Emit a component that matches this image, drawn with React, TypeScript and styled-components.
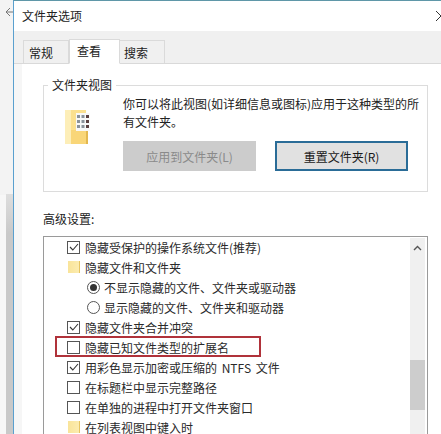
import React from "react";
import styled, { createGlobalStyle } from "styled-components";

const Global = createGlobalStyle`
  html, body { margin: 0; padding: 0; background: #fff; overflow: hidden; }
  body { font-family: "Noto Sans CJK SC", "Liberation Sans", sans-serif; font-size: 12px; color: #222; }
  #root { width: 441px; height: 434px; overflow: hidden; }
`;

const Screen = styled.div`
  display: flex;
  width: 441px;
  height: 434px;
  overflow: hidden;
`;
const Strip = styled.div`
  width: 13px;
  flex: none;
  display: flex;
  flex-direction: column;
  justify-content: space-between;
  background: linear-gradient(to bottom, #f3f3f3 0, #f3f3f3 195px, #f7f7f7 195px, #f7f7f7 100%);
`;
const StripIcon = styled.svg`
  display: block;
  margin: 7px 0 0 5px;
`;
const StripShade = styled.div`
  height: 240px;
  margin-left: 6px;
  background: linear-gradient(to bottom, #dedede, #c9c9c9 40px);
`;
const Win = styled.div`
  flex: 1;
  min-width: 0;
  display: flex;
  flex-direction: column;
  border-left: 1px solid #5aa0cf;
  border-top: 1px solid #5f97a8;
  background: #f6f6f6;
`;
const TitleBar = styled.div`
  height: 30px;
  flex: none;
  display: flex;
  align-items: center;
  justify-content: space-between;
  padding: 0 0 2px 8px;
  box-sizing: border-box;
  background: #fff;
  font-size: 12px;
`;
const CloseMark = styled.svg`
  display: block;
  margin-top: 2px;
`;
const TabBar = styled.div`
  height: 33px;
  flex: none;
  display: flex;
  align-items: flex-end;
  padding-left: 9px;
  background: #f0f0f0;
  border-bottom: 1px solid #d9d9d9;
  box-sizing: border-box;
`;
const Tab = styled.div<{ $active?: boolean; $w: number; $pad: number }>`
  width: ${(p) => p.$w}px;
  height: ${(p) => (p.$active ? 25 : 23)}px;
  box-sizing: border-box;
  display: flex;
  align-items: center;
  padding-left: ${(p) => p.$pad}px;
  padding-bottom: ${(p) => (p.$active ? 3 : 0)}px;
  border: 1px solid #dadada;
  border-left-width: ${(p) => (p.$active ? 1 : 0)}px;
  border-bottom: ${(p) => (p.$active ? "1px solid #fff" : "none")};
  background: ${(p) => (p.$active ? "#fff" : "#f0f0f0")};
  margin-bottom: ${(p) => (p.$active ? -1 : 0)}px;
  position: relative;
  &:first-child { border-left-width: 1px; }
`;
const Page = styled.div`
  flex: 1;
  min-height: 0;
  margin-left: 8px;
  padding: 14px 0 0 21px;
  background: #fff;
`;
const Group = styled.fieldset`
  width: 385px;
  height: 114px;
  box-sizing: border-box;
  margin: 0;
  padding: 0;
  border: 1px solid #dcdcdc;
  display: flex;
`;
const GroupTitle = styled.legend`
  margin-left: 4px;
  padding: 0 4px;
  line-height: 14px;
  font-size: 12px;
`;
const GroupBody = styled.div`
  display: flex;
  padding: 3px 0 0 21px;
`;
const BigFolder = styled.svg`
  display: block;
  flex: none;
  margin-top: 15px;
`;
const GroupMain = styled.div`
  margin-left: 32px;
  width: 300px;
`;
const Desc = styled.div`
  line-height: 18px;
  height: 36px;
  white-space: nowrap;
  color: #222;
`;
const Buttons = styled.div`
  display: flex;
  gap: 19px;
  margin-top: 10px;
`;
const Btn = styled.div<{ $primary?: boolean }>`
  width: 133px;
  height: 30px;
  box-sizing: border-box;
  display: flex;
  align-items: center;
  justify-content: center;
  background: ${(p) => (p.$primary ? "#e1e1e1" : "#cccccc")};
  color: ${(p) => (p.$primary ? "#1a1a1a" : "#8a8a8a")};
  border: ${(p) => (p.$primary ? "2px solid #2a6c97" : "none")};
`;
const AdvLabel = styled.div`
  margin-top: 19px;
  line-height: 16px;
  height: 25px;
`;
const ListBox = styled.div`
  width: 385px;
  height: 220px;
  box-sizing: border-box;
  border: 1px solid #9a9a9a;
  display: flex;
  background: #fff;
`;
const Rows = styled.div`
  flex: 1;
  min-width: 0;
`;
const Row = styled.div<{ $indent?: number }>`
  height: 20px;
  position: relative;
  display: flex;
  align-items: center;
  gap: 5px;
  padding-left: ${(p) => 23 + (p.$indent ?? 0)}px;
  white-space: nowrap;
  word-spacing: 2px;
  color: #2a2a2a;
`;
const Box = styled.span`
  width: 11px;
  height: 11px;
  flex: none;
  border: 1px solid #555;
  background: #fff;
  display: flex;
  align-items: center;
  justify-content: center;
`;
const Radio = styled.span<{ $on?: boolean }>`
  width: 11px;
  height: 11px;
  flex: none;
  border: 1px solid #555;
  border-radius: 50%;
  display: flex;
  align-items: center;
  justify-content: center;
  margin-right: -1px;
  &::after {
    content: "";
    width: 7px;
    height: 7px;
    border-radius: 50%;
    background: ${(p) => (p.$on ? "#333" : "transparent")};
  }
`;
const SmallFolder = styled.span`
  width: 11px;
  height: 12px;
  flex: none;
  margin-left: 1px;
  background: linear-gradient(to right, #f9e49a, #fcecb0);
  border-right: 1px solid #e6c463;
`;
const Highlight = styled.div`
  position: absolute;
  left: 11px;
  top: -1px;
  width: 206px;
  height: 21px;
  box-sizing: border-box;
  border: 2px solid #b0323a;
`;
const ScrollBar = styled.div`
  width: 15px;
  flex: none;
  margin: 1px 2px 0 0;
  background: #f0f0f0;
  display: flex;
  flex-direction: column;
  align-items: center;
`;
const Arrow = styled.svg`
  display: block;
  margin-top: 7px;
`;
const Thumb = styled.div`
  width: 100%;
  height: 50px;
  margin-top: 109px;
  background: #cdcdcd;
`;

const Check = () => (
  <svg width="10" height="8" viewBox="0 0 10 8" fill="none">
    <path d="M1 4 L3.8 7 L9 1" stroke="#333" strokeWidth="1.1" />
  </svg>
);

const rows: Array<{ kind: "check" | "empty" | "folder" | "on" | "off"; text: string; mark?: boolean }> = [
  { kind: "check", text: "隐藏受保护的操作系统文件(推荐)" },
  { kind: "folder", text: "隐藏文件和文件夹" },
  { kind: "on", text: "不显示隐藏的文件、文件夹或驱动器" },
  { kind: "off", text: "显示隐藏的文件、文件夹和驱动器" },
  { kind: "check", text: "隐藏文件夹合并冲突" },
  { kind: "empty", text: "隐藏已知文件类型的扩展名", mark: true },
  { kind: "check", text: "用彩色显示加密或压缩的 NTFS 文件" },
  { kind: "empty", text: "在标题栏中显示完整路径" },
  { kind: "empty", text: "在单独的进程中打开文件夹窗口" },
  { kind: "folder", text: "在列表视图中键入时" },
];

export default function App() {
  return (
    <Screen>
      <Global />
      <Strip>
        <StripIcon width="8" height="10" viewBox="0 0 8 10" fill="none">
          <path d="M5 1 L1 5 L5 9 M1 5 H8" stroke="#777" strokeWidth="1" />
        </StripIcon>
        <StripShade />
      </Strip>
      <Win>
        <TitleBar>
          文件夹选项
          <CloseMark width="5" height="12" viewBox="0 0 5 12" fill="none">
            <path d="M0 1 L5 6 L0 11" stroke="#333" strokeWidth="1" />
          </CloseMark>
        </TitleBar>
        <TabBar>
          <Tab $w={46} $pad={5}>常规</Tab>
          <Tab $w={51} $pad={7} $active>查看</Tab>
          <Tab $w={45} $pad={4}>搜索</Tab>
        </TabBar>
        <Page>
          <Group>
            <GroupTitle>文件夹视图</GroupTitle>
            <GroupBody>
              <BigFolder width="26" height="36" viewBox="0 0 26 36">
                <path d="M0 0 H21 V34 H0 Z" fill="#fbe08f" />
                <path d="M0 20 H21 V34 H0 Z" fill="#f9d678" />
                <path d="M0 0 L6 0 L6 34 L0 34 Z" fill="#fdeeb8" />
                <path d="M21 12 H23 V34 H21 Z" fill="#e3b850" />
                <rect x="11" y="3" width="14" height="18" fill="#f8f8f8" />
                {[5, 10, 15].map((y) =>
                  [12, 16.5, 21].map((x) => (
                    <rect key={`${x}-${y}`} x={x} y={y} width="3" height="3" fill={x === 21 ? "#5a4040" : "#8a929a"} />
                  ))
                )}
              </BigFolder>
              <GroupMain>
                <Desc>
                  你可以将此视图(如详细信息或图标)应用于这种类型的所
                  <br />
                  有文件夹。
                </Desc>
                <Buttons>
                  <Btn>应用到文件夹(L)</Btn>
                  <Btn $primary>重置文件夹(R)</Btn>
                </Buttons>
              </GroupMain>
            </GroupBody>
          </Group>
          <AdvLabel>高级设置:</AdvLabel>
          <ListBox>
            <Rows>
              {rows.map((r) => (
                <Row key={r.text} $indent={r.kind === "on" || r.kind === "off" ? 20 : 0}>
                  {r.kind === "check" && <Box><Check /></Box>}
                  {r.kind === "empty" && <Box />}
                  {r.kind === "folder" && <SmallFolder />}
                  {r.kind === "on" && <Radio $on />}
                  {r.kind === "off" && <Radio />}
                  {r.text}
                  {r.mark && <Highlight />}
                </Row>
              ))}
            </Rows>
            <ScrollBar>
              <Arrow width="9" height="6" viewBox="0 0 9 6" fill="none">
                <path d="M1 5 L4.5 1.5 L8 5" stroke="#555" strokeWidth="1.4" />
              </Arrow>
              <Thumb />
            </ScrollBar>
          </ListBox>
        </Page>
      </Win>
    </Screen>
  );
}
